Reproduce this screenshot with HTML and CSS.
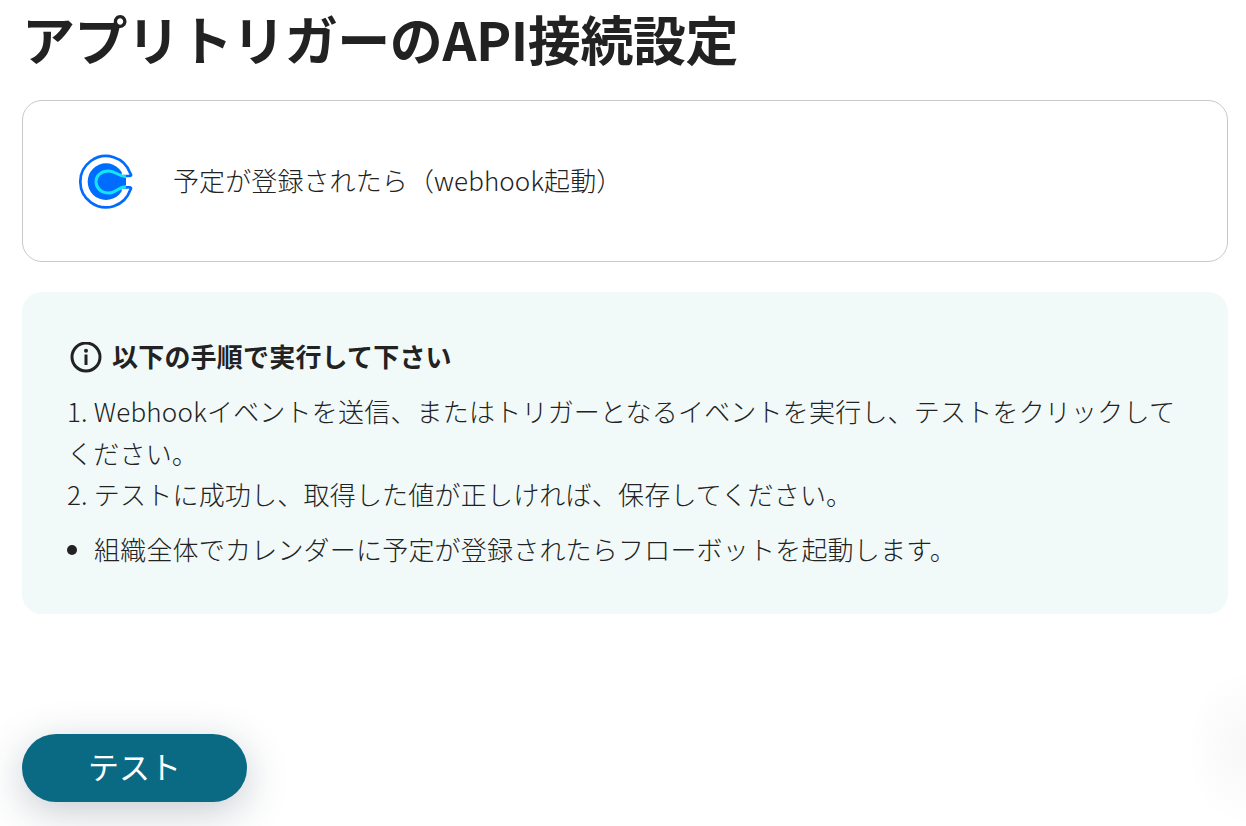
FILE: index.html
```html
<!DOCTYPE html>
<html lang="ja">
<head>
    <meta charset="UTF-8">
    <meta name="viewport" content="width=device-width, initial-scale=1.0">
    <title>アプリトリガーのAPI接続設定</title>
    <link rel="stylesheet" href="styles.css">
</head>
<body>
    <h1>アプリトリガーのAPI接続設定</h1>
    <div class="app-card">
        <svg class="app-logo" viewBox="54 42 165 165" width="55" height="55">
            <circle cx="135" cy="125" r="55" fill="#006bff"/>
            <path d="M182 98 H210 V152 H182 Z" fill="#fff"/>
            <path d="M186 108 H204 Q214 108 207.800 100 A77 77 0 1 0 207.800 150 Q214 142 204 142 H186" fill="none" stroke="#006bff" stroke-width="8"/>
            <path d="M195 110 C172 110 165 93 143 93 C120 93 105 107 105 125 C105 143 120 159 143 159 C165 159 172 140 195 140" fill="#006bff" stroke="#14e4f0" stroke-width="9"/>
        </svg>
        <span class="app-label">予定が登録されたら（webhook起動）</span>
    </div>
    <div class="info-box">
        <div class="info-title">
            <svg viewBox="0 0 32 32" width="32" height="32">
                <circle cx="16" cy="15" r="14" fill="none" stroke="#222" stroke-width="3"/>
                <circle cx="16" cy="8.800" r="2" fill="#222"/>
                <rect x="14.500" y="12.500" width="3" height="10.500" fill="#222"/>
            </svg>
            <span>以下の手順で実行して下さい</span>
        </div>
        <p class="steps">1. Webhookイベントを送信、またはトリガーとなるイベントを実行し、テストをクリックしてください。<br>2. テストに成功し、取得した値が正しければ、保存してください。</p>
        <ul class="notes">
            <li>組織全体でカレンダーに予定が登録されたらフローボットを起動します。</li>
        </ul>
    </div>
    <button class="test-button"><span>テスト</span></button>
    <div class="edge-shadow"></div>
</body>
</html>
```

FILE: styles.css
```css
html, body {
    height: 100%;
}
body {
    position: relative;
    margin: 0;
    padding: 0 18px 0 22px;
    overflow: hidden;
    font-family: "Noto Sans CJK JP", "Noto Sans", sans-serif;
    color: #222;
    background-color: #fff;
}
h1 {
    margin: 0;
    height: 100px;
    font-size: 53px;
    line-height: 76px;
    font-weight: 700;
    letter-spacing: -0.45px;
    white-space: nowrap;
}
.app-card {
    display: flex;
    align-items: center;
    gap: 39px;
    box-sizing: border-box;
    height: 162px;
    padding-left: 56px;
    border: 1px solid #c9c9c9;
    border-radius: 20px;
}
.app-logo {
    flex: none;
}
.app-label {
    margin-bottom: 3px;
    font-size: 26px;
    font-weight: 300;
    letter-spacing: 0.1px;
}
.info-box {
    box-sizing: border-box;
    height: 322px;
    margin-top: 30px;
    padding: 48px 48px 0;
    background-color: #f1faf9;
    border-radius: 20px;
}
.info-title {
    display: flex;
    align-items: center;
    gap: 10px;
    height: 36px;
    font-size: 26px;
    font-weight: 700;
    line-height: 30px;
}
.info-title span {
    margin-bottom: 4px;
    letter-spacing: 0.2px;
}
.steps {
    margin: 14px 0 0 -3px;
    font-size: 26px;
    line-height: 41.500px;
    font-weight: 300;
    letter-spacing: 0.21px;
}
.notes {
    margin: 13px 0 0;
    padding-left: 24px;
    font-size: 26px;
    line-height: 42px;
    font-weight: 300;
    letter-spacing: 0.2px;
}
.test-button {
    display: block;
    width: 225px;
    height: 68px;
    margin-top: 120px;
    padding: 0 0 6px;
    font-family: inherit;
    font-size: 31px;
    font-weight: 400;
    color: #fff;
    background-color: #0a6a84;
    border: none;
    border-radius: 34px;
    box-shadow: 0 10px 40px rgba(30, 50, 70, 0.25);
}
.edge-shadow {
    position: absolute;
    right: 0;
    top: 670px;
    width: 60px;
    height: 156px;
    background: radial-gradient(ellipse 60px 78px at 100% 50%, rgba(30, 40, 50, 0.035), rgba(30, 40, 50, 0));
}
```
